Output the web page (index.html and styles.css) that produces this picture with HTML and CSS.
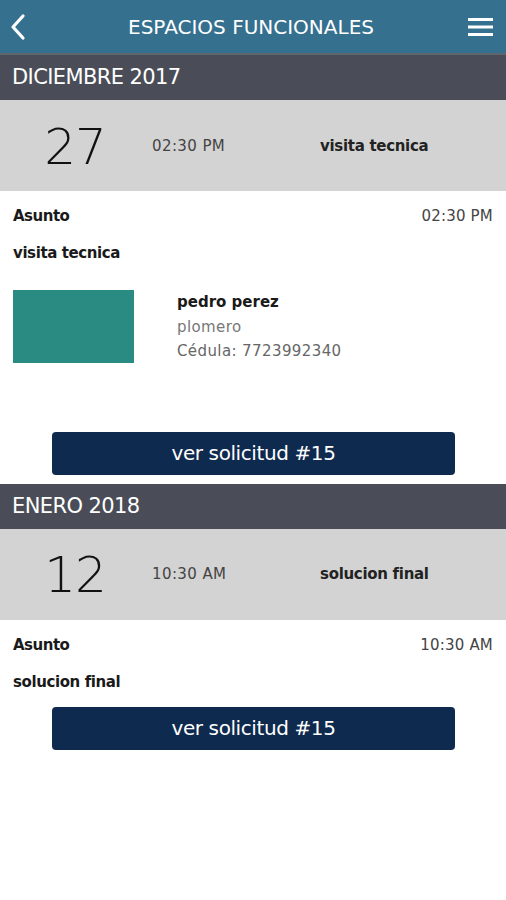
FILE: index.html
```html
<!DOCTYPE html>
<html lang="es">
<head>
<meta charset="utf-8">
<title>Espacios Funcionales</title>
<link rel="stylesheet" href="styles.css">
</head>
<body>
<header class="topbar">
  <svg class="back" width="20" height="28" viewBox="0 0 20 28"><path d="M15 3 L5 14 L15 25" fill="none" stroke="#fff" stroke-width="3.2" stroke-linecap="round" stroke-linejoin="round"/></svg>
  <h1 class="title">ESPACIOS FUNCIONALES</h1>
  <svg class="menu" width="26" height="22" viewBox="0 0 26 22"><rect x="0" y="2" width="25" height="3" fill="#fff"/><rect x="0" y="9.5" width="25" height="3" fill="#fff"/><rect x="0" y="17" width="25" height="3" fill="#fff"/></svg>
</header>

<section class="month">
  <div class="month-bar">DICIEMBRE 2017</div>
  <div class="day-row">
    <div class="day-num">27</div>
    <div class="day-time">02:30 PM</div>
    <div class="day-title">visita tecnica</div>
  </div>
  <div class="detail">
    <div class="detail-head"><span class="label">Asunto</span><span class="time">02:30 PM</span></div>
    <div class="subject">visita tecnica</div>
    <div class="person">
      <div class="photo"></div>
      <div class="info">
        <div class="name">pedro perez</div>
        <div class="muted">plomero</div>
        <div class="muted dark">Cédula: 7723992340</div>
      </div>
    </div>
    <button class="btn btn-far">ver solicitud #15</button>
  </div>
</section>

<section class="month">
  <div class="month-bar">ENERO 2018</div>
  <div class="day-row">
    <div class="day-num">12</div>
    <div class="day-time">10:30 AM</div>
    <div class="day-title">solucion final</div>
  </div>
  <div class="detail">
    <div class="detail-head"><span class="label">Asunto</span><span class="time">10:30 AM</span></div>
    <div class="subject">solucion final</div>
    <button class="btn">ver solicitud #15</button>
  </div>
</section>
</body>
</html>
```

FILE: styles.css
```css
* { box-sizing: border-box; }
body {
  margin: 0;
  background: #fff;
  font-family: "DejaVu Sans", sans-serif;
  color: #1a1a1a;
  width: 506px;
}
.topbar {
  height: 55px;
  background: #35708f;
  border-bottom: 2px solid #5e6670;
  display: flex;
  align-items: center;
  justify-content: space-between;
  padding: 0 12px 0 8px;
}
.back { display: block; }
.menu { display: block; }
.title {
  margin: 0;
  font-weight: normal;
  font-size: 20px;
  color: #fff;
  letter-spacing: 0;
  padding-left: 6px;
}
.month-bar {
  height: 45px;
  background: #4a4d57;
  color: #fff;
  font-size: 21px;
  line-height: 45px;
  padding-left: 12px;
  letter-spacing: -0.6px;
}
.day-row {
  height: 91px;
  background: #d3d3d3;
  display: grid;
  grid-template-columns: 152px 168px 1fr;
  align-items: center;
}
.day-num {
  text-align: center;
  font-size: 50px;
  font-weight: 300;
  color: #111;
  letter-spacing: -1px;
  padding-top: 2px;
  padding-right: 2px;
}
.day-time {
  font-size: 15px;
  color: #444;
  letter-spacing: 0.4px;
}
.day-title {
  font-size: 15px;
  font-weight: bold;
  color: #222;
  letter-spacing: -0.3px;
}
.detail {
  padding: 16px 13px 9px 13px;
  display: flex;
  flex-direction: column;
}
.detail-head {
  display: flex;
  justify-content: space-between;
  line-height: 18px;
}
.label {
  font-size: 15px;
  font-weight: bold;
  letter-spacing: -0.5px;
}
.time {
  font-size: 15px;
  color: #444;
  letter-spacing: 0.2px;
}
.subject {
  margin-top: 19px;
  line-height: 18px;
  font-size: 15px;
  font-weight: bold;
  letter-spacing: -0.4px;
}
.person {
  margin-top: 28px;
  display: flex;
  gap: 43px;
}
.photo {
  width: 121px;
  height: 73px;
  background: #2a8b83;
}
.info { line-height: 24.5px; }
.name {
  font-size: 15px;
  font-weight: bold;
  letter-spacing: 0;
}
.muted {
  font-size: 15px;
  color: #777;
  letter-spacing: 0.4px;
}
.muted.dark { color: #666; }
.btn {
  margin: 16px 0 0 39px;
  width: 403px;
  height: 43px;
  border: none;
  border-radius: 4px;
  background: #0e2a4e;
  color: #fff;
  font-family: "DejaVu Sans", sans-serif;
  font-size: 20px;
  letter-spacing: -0.4px;
  padding: 0;
}
.btn-far { margin-top: 68px; }
```
